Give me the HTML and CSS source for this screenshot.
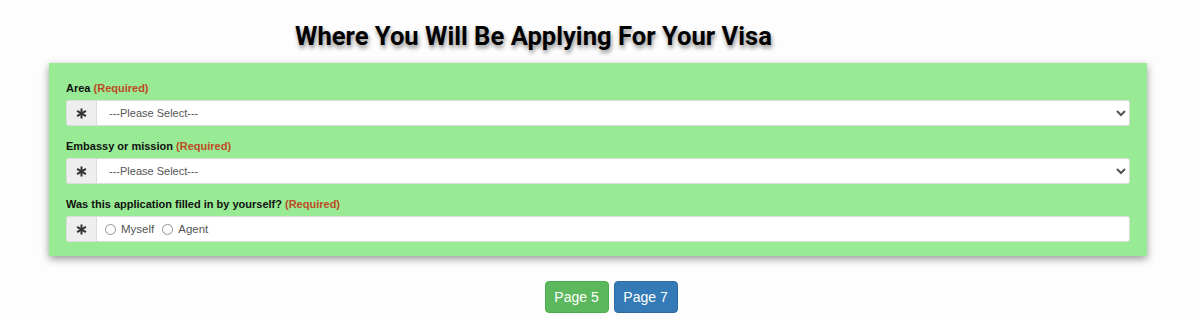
FILE: index.html
```html
<!DOCTYPE html>
<html lang="en">

<head>
    <meta charset="utf8">
    <title>Visa application</title>
    <link rel="stylesheet" href="styles.css">
</head>

<body>
    <header class="page-title">
        <h1>Where You Will Be Applying For Your Visa</h1>
    </header>

    <div class="form-panel">
        <div class="field">
            <label>Area <span class="required">(Required)</span></label>
            <div class="input-group">
                <span class="addon">
                    <svg width="11" height="11" viewBox="0 0 12 12"><g stroke="#333" stroke-width="2.2" stroke-linecap="butt"><line x1="6" y1="0.5" x2="6" y2="11.5"/><line x1="1.2" y1="3.2" x2="10.8" y2="8.8"/><line x1="1.2" y1="8.8" x2="10.8" y2="3.2"/></g></svg>
                </span>
                <select class="control">
                    <option>---Please Select---</option>
                </select>
            </div>
        </div>

        <div class="field">
            <label>Embassy or mission <span class="required">(Required)</span></label>
            <div class="input-group">
                <span class="addon">
                    <svg width="11" height="11" viewBox="0 0 12 12"><g stroke="#333" stroke-width="2.2" stroke-linecap="butt"><line x1="6" y1="0.5" x2="6" y2="11.5"/><line x1="1.2" y1="3.2" x2="10.8" y2="8.8"/><line x1="1.2" y1="8.8" x2="10.8" y2="3.2"/></g></svg>
                </span>
                <select class="control">
                    <option>---Please Select---</option>
                </select>
            </div>
        </div>

        <div class="field">
            <label>Was this application filled in by yourself? <span class="required">(Required)</span></label>
            <div class="input-group">
                <span class="addon">
                    <svg width="11" height="11" viewBox="0 0 12 12"><g stroke="#333" stroke-width="2.2" stroke-linecap="butt"><line x1="6" y1="0.5" x2="6" y2="11.5"/><line x1="1.2" y1="3.2" x2="10.8" y2="8.8"/><line x1="1.2" y1="8.8" x2="10.8" y2="3.2"/></g></svg>
                </span>
                <div class="control radios">
                    <label class="radio"><input type="radio" name="filled"> Myself</label>
                    <label class="radio"><input type="radio" name="filled"> Agent</label>
                </div>
            </div>
        </div>
    </div>

    <div class="pager">
        <button class="btn prev">Page 5</button>
        <button class="btn next">Page 7</button>
    </div>
</body>

</html>
```

FILE: styles.css
```css
* {
    box-sizing: border-box;
    margin: 0;
    padding: 0;
}

body {
    background-color: #fdfdfd;
    font-family: "Liberation Sans", Arial, sans-serif;
    color: #222;
}

header.page-title {
    height: 63px;
    display: flex;
    align-items: center;
    padding-left: 295px;
    padding-top: 8px;
}

header.page-title h1 {
    font-family: Roboto, sans-serif;
    font-weight: 700;
    font-size: 25.6px;
    line-height: 30px;
    color: #000;
    text-shadow: 1px 3px 4px rgba(0, 0, 0, .45);
}

div.form-panel {
    margin-left: 49px;
    width: 1098px;
    background-color: #98eb94;
    padding: 18px 17px 14px 17px;
    box-shadow: 0 3px 8px rgba(0, 0, 0, .4);
    display: flex;
    flex-direction: column;
    row-gap: 13px;
}

div.field > label {
    display: block;
    font-size: 11px;
    line-height: 14px;
    font-weight: 700;
    margin-bottom: 5px;
    color: #111;
}

span.required {
    color: #bf4a25;
}

div.input-group {
    display: flex;
    height: 26px;
    border-radius: 3px;
    overflow: hidden;
    border: 1px solid #dcdcdc;
    background-color: #fff;
}

span.addon {
    width: 30px;
    flex-shrink: 0;
    background-color: #eee;
    border-right: 1px solid #ddd;
    display: flex;
    align-items: center;
    justify-content: center;
}

.control {
    flex-grow: 1;
    height: 100%;
    border: none;
    background-color: #fff;
    font-family: "Liberation Sans", Arial, sans-serif;
    font-size: 11px;
    color: #555;
    padding-left: 8px;
    outline: none;
}

div.radios {
    display: flex;
    align-items: center;
    column-gap: 8px;
    padding-left: 8px;
}

label.radio {
    display: flex;
    align-items: center;
    column-gap: 3px;
    font-size: 11.5px;
    color: #555;
}

label.radio input {
    width: 11px;
    height: 11px;
    margin: 0 2px 0 0;
    opacity: .8;
}

div.pager {
    display: flex;
    justify-content: center;
    column-gap: 5px;
    margin-top: 25px;
    padding-left: 22px;
}

button.btn {
    width: 64px;
    height: 32px;
    border-radius: 4px;
    font-family: "Liberation Sans", Arial, sans-serif;
    font-size: 14px;
    color: #fff;
    cursor: pointer;
}

button.prev {
    background-color: #5cb85c;
    border: 1px solid #4cae4c;
}

button.next {
    background-color: #337ab7;
    border: 1px solid #2e6da4;
}
```
